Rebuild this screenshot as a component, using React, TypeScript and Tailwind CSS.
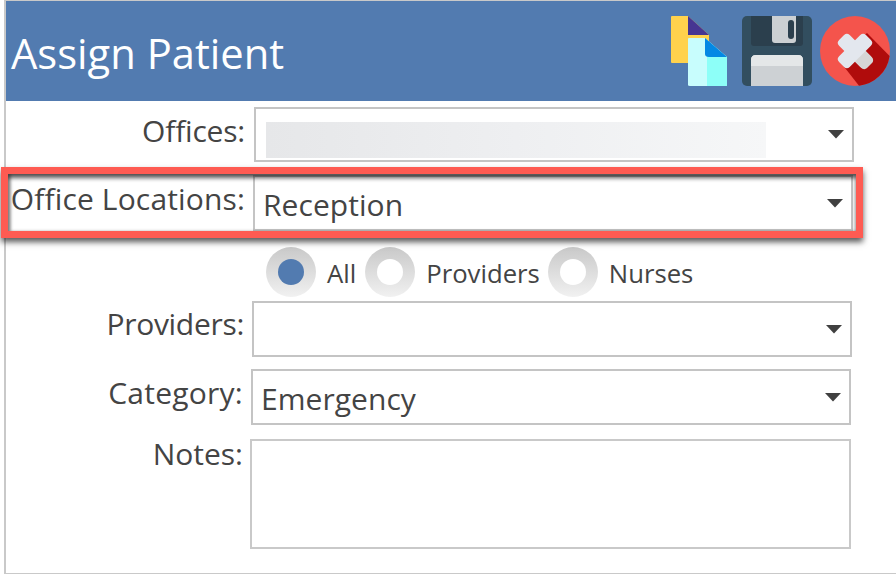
const font = { fontFamily: '"Open Sans", "Noto Sans", sans-serif' };

function Caret() {
  return (
    <svg width="16" height="9" viewBox="0 0 16 9" className="shrink-0">
      <path d="M0 0H16L8 8.5Z" fill="#404040" />
    </svg>
  );
}

function FilesIcon() {
  return (
    <svg width="56" height="70" viewBox="0 0 56 70">
      <path d="M1 0H17L38 19V47H1Q0 47 0 46V1Q0 0 1 0Z" fill="#ffd24d" />
      <path d="M17 0L38 19Q38 19 36 19H17Z" fill="#463592" />
      <path d="M18 22H34L56 41V69Q56 70 55 70H19Q17 70 17 69V23Q17 22 18 22Z" fill="#c8fdfd" />
      <path d="M36 24L56 41V69Q56 70 55 70H36Z" fill="#8dfff8" />
      <path d="M34 22L56 41V41H38Q34 41 34 38Z" fill="#0388e4" />
    </svg>
  );
}

function SaveIcon() {
  return (
    <svg width="70" height="70" viewBox="0 0 70 70">
      <rect width="70" height="70" rx="5" fill="#324e5f" />
      <path d="M9 0H61V27Q61 30 58 30H12Q9 30 9 27Z" fill="#2b3f4d" />
      <path d="M30 0H54V24Q54 27 51 27H33Q30 27 30 24Z" fill="#ccd0d3" />
      <rect x="46" y="4" width="6" height="19" rx="3" fill="#2b3f4d" />
      <path d="M9 70V44Q9 39 14 39H56Q61 39 61 44V70Z" fill="#cdd1d4" />
      <path d="M9 50V44Q9 39 14 39H56Q61 39 61 44V50Z" fill="#e4e7e8" />
    </svg>
  );
}

function CloseIcon() {
  return (
    <svg width="70" height="70" viewBox="0 0 70 70">
      <circle cx="35" cy="35" r="35" fill="#f4544c" />
      <path d="M18 43L39 69.8A35 35 0 0 0 69.6 40L47 17Z" fill="#b00c0c" />
      <rect x="16" y="27.5" width="38" height="15" rx="4" fill="#e3e7ee" transform="rotate(45 35 35)" />
      <rect x="16" y="27.5" width="38" height="15" rx="4" fill="#e3e7ee" transform="rotate(-45 35 35)" />
      <path d="M35 45.6L42 52.5Q45 54 47 52L52 47Q54 45 52.5 42L45.6 35Z" fill="#d6d6d6" />
    </svg>
  );
}

function Radio({ label, checked }: { label: string; checked?: boolean }) {
  return (
    <div className="flex items-center">
      <span className="flex h-[50px] w-[50px] items-center justify-center rounded-full bg-gradient-to-b from-[#c9c9c9] to-[#f1f1f1]">
        <span className={checked ? "h-[26px] w-[26px] rounded-full bg-[#527bb0]" : "h-[26px] w-[26px] rounded-full bg-white"} />
      </span>
      <span className="ml-[11px] mt-[4px] text-[25.7px] leading-[34px] text-[#444]">{label}</span>
    </div>
  );
}

function Row({ label, children, left, top, labelTop = 0 }: { label: string; children: React.ReactNode; left: string; top: string; labelTop?: number }) {
  return (
    <div className={`flex items-start ${top}`}>
      <div className={`whitespace-nowrap text-right text-[30px] leading-[38px] text-[#444] ${left}`} style={{ marginTop: labelTop }}>
        {label}
      </div>
      {children}
    </div>
  );
}

export default function App() {
  return (
    <div className="relative h-[574px] w-[896px] overflow-hidden bg-white" style={font}>
      <div className="ml-[4px] h-[574px] border-y border-l-2 border-[#c9c9c9]">
        <div className="flex h-[100px] items-center justify-between bg-[#527bb0] pl-[5px] pr-[6px]">
          <h1 className="mt-[4px] text-[41.7px] leading-[50px] text-white">Assign Patient</h1>
          <div className="flex items-center">
            <FilesIcon />
            <div className="ml-[15px]"><SaveIcon /></div>
            <div className="ml-[8px]"><CloseIcon /></div>
          </div>
        </div>

        <Row label="Offices:" left="w-[239px] tracking-[-0.2px]" top="mt-[6px]" labelTop={5}>
          <div className="ml-[9px] flex h-[55px] w-[600px] items-center justify-between border-2 border-[#c4c4c4] pl-[10px] pr-[8px]">
            <div className="mt-[10px] h-[36px] w-[500px] bg-gradient-to-r from-[#e6e7e9] via-[#eeeff1] to-[#f6f7f8]" />
            <Caret />
          </div>
        </Row>

        <Row label="Office Locations:" left="w-[239px] tracking-[0.15px]" top="mt-[13px]" labelTop={5}>
          <div className="ml-[8px] flex h-[56px] w-[600px] items-center justify-between border-2 border-[#c4c4c4] pl-[8px] pr-[8px]">
            <span className="mt-[4px] text-[30px] leading-[40px] tracking-[0.05px] text-[#444]">Reception</span>
            <Caret />
          </div>
        </Row>

        <div className="ml-[260px] mt-[16px] flex h-[50px] items-center">
          <Radio label="All" checked />
          <div className="ml-[9px]"><Radio label="Providers" /></div>
          <div className="ml-[8px]"><Radio label="Nurses" /></div>
        </div>

        <Row label="Providers:" left="w-[238px] tracking-[-0.3px]" top="mt-[4px]" labelTop={4}>
          <div className="ml-[8px] flex h-[56px] w-[600px] items-center justify-end border-2 border-[#c4c4c4] pr-[8px]">
            <Caret />
          </div>
        </Row>

        <Row label="Category:" left="w-[237px] tracking-[0.25px]" top="mt-[12px]" labelTop={5}>
          <div className="ml-[8px] flex h-[56px] w-[600px] items-center justify-between border-2 border-[#c4c4c4] pl-[8px] pr-[8px]">
            <span className="mt-[3px] text-[30px] leading-[40px] tracking-[0.05px] text-[#444]">Emergency</span>
            <Caret />
          </div>
        </Row>

        <Row label="Notes:" left="w-[237px]" top="mt-[14px]" labelTop={-4}>
          <div className="ml-[7px] h-[110px] w-[601px] border-2 border-[#c9c9c9]" />
        </Row>
      </div>

      {/* red annotation over the locations row */}
      <div className="absolute left-[1px] top-[167px] h-[71px] w-[862px] border-[7px] border-[#fe5b52] shadow-[0_4px_6px_rgba(0,0,0,0.65),inset_0_4px_4px_rgba(0,0,0,0.65),inset_3px_0_3px_rgba(0,0,0,0.3)]" />
    </div>
  );
}
